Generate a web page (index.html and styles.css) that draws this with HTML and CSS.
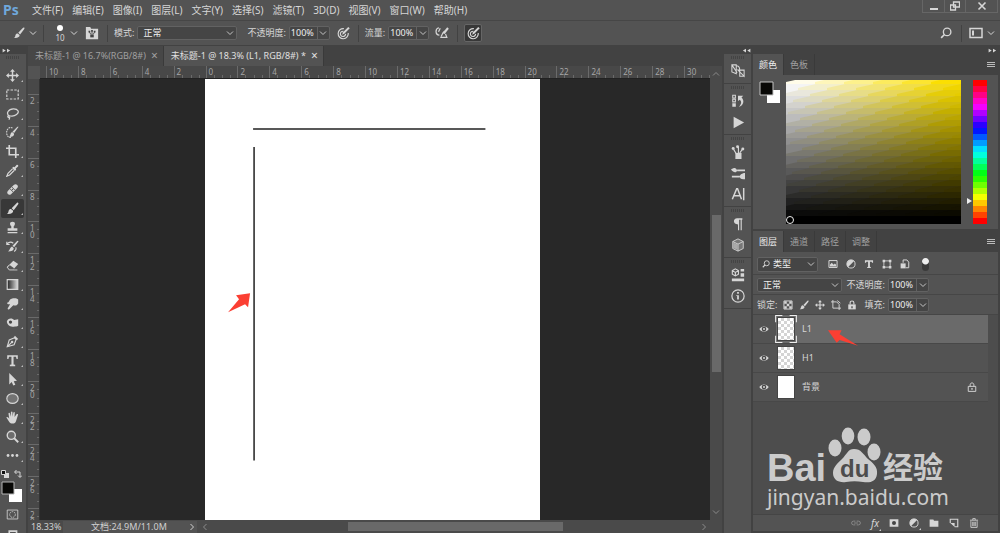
FILE: index.html
```
<!DOCTYPE html>
<html lang="zh-CN">
  <head>
    <meta charset="UTF-8" />
    <meta name="viewport" content="width=device-width, initial-scale=1.0" />
    <title>未标题-1 @ 18.3% (L1, RGB/8#)</title>
    <link rel="stylesheet" href="styles.css">
  </head>
  <body>
    <svg class="sprite" aria-hidden="true">
      <symbol id="caret" viewBox="0 0 8 8"><path d="M1 2.500l3 3 3-3" fill="none" stroke="currentColor" /></symbol>
      <symbol id="brush" viewBox="0 0 16 16">
        <path d="M14.8.8c.9.6.5 1.5 0 2.2L9.5 10 7 7.8l5.700-6C13.400 1 14.100.4 14.800.8z" />
        <path d="M6.200 8.500l2.600 2.300c.3 2.400-2.500 4.500-7.800 3.900 2.300-1 1.700-2.500 2.500-4.400.5-1.200 1.500-1.800 2.700-1.800z" />
      </symbol>
      <symbol id="move" viewBox="0 0 16 16">
        <path d="M8 0l3 3.500H8.900v3.600h3.600V5L16 8l-3.500 3V8.900H8.900v3.600H11L8 16l-3-3.500h2.100V8.900H3.500V11L0 8l3.500-3v2.100h3.600V3.500H5z" />
      </symbol>
      <symbol id="half" viewBox="0 0 16 16">
        <circle cx="8" cy="8" r="6.500" fill="none" stroke="currentColor" stroke-width="1.500" />
        <path d="M12.600 3.400A6.500 6.500 0 0 0 3.400 12.600z" />
      </symbol>
      <symbol id="search" viewBox="0 0 16 16">
        <circle cx="9.500" cy="6.500" r="5" fill="none" stroke="currentColor" stroke-width="1.800" />
        <path d="M6 10l-4.500 4.500" stroke="currentColor" stroke-width="2.200" />
      </symbol>
      <symbol id="crop" viewBox="0 0 16 16">
        <path d="M4 0v12h12M0 4h12v12" fill="none" stroke="currentColor" stroke-width="2" />
      </symbol>
      <symbol id="eye" viewBox="0 0 16 16">
        <path d="M.5 8C4 2.500 12 2.500 15.500 8 12 13.500 4 13.500.5 8z" />
        <circle cx="8" cy="8" r="3.700" fill="#484848" /><circle cx="8" cy="8" r="1.600" />
      </symbol>
      <symbol id="target" viewBox="0 0 16 16">
        <path d="M9 3a5.800 5.800 0 1 0 5 5M8.500 6A3 3 0 1 0 11 9" fill="none" stroke="currentColor" stroke-width="1.300" />
        <path d="M7 10l1-3 6-6 1.700 1.500-6 6z" />
      </symbol>
      <symbol id="double" viewBox="0 0 16 8"><path d="M1 1l5 3-5 3zM8 1l5 3-5 3z" /></symbol>
    </svg>

    <div class="app">
      <header class="menubar">
        <span class="logo">Ps</span>
        <nav class="menus">
          <button>文件(F)</button>
          <button>编辑(E)</button>
          <button>图像(I)</button>
          <button>图层(L)</button>
          <button>文字(Y)</button>
          <button>选择(S)</button>
          <button>滤镜(T)</button>
          <button>3D(D)</button>
          <button>视图(V)</button>
          <button>窗口(W)</button>
          <button>帮助(H)</button>
        </nav>
        <div class="window-buttons">
          <button aria-label="最小化"><svg class="s10" viewBox="0 0 10 10"><path d="M1 7h8v2H1z" /></svg></button>
          <button aria-label="还原"><svg class="s10" viewBox="0 0 10 10"><path d="M3.500 1h6v5h-6zM.5 4h5v5h-5z" fill="none" stroke="currentColor" stroke-width="1.300" /></svg></button>
          <button class="close" aria-label="关闭"><svg class="s10" viewBox="0 0 10 10"><path d="M1.500 1.500l7 7m0-7l-7 7" stroke="currentColor" stroke-width="1.600" /></svg></button>
        </div>
      </header>

      <div class="options">
        <button class="opt-brush" aria-label="画笔工具"><svg class="s12"><use href="#brush" /></svg><svg class="s8"><use href="#caret" /></svg></button>
        <i class="sep"></i>
        <button class="brush-size"><span class="dot"></span>10</button>
        <svg class="s8"><use href="#caret" /></svg>
        <button class="opt-icon" aria-label="画笔面板">
          <svg class="s14" viewBox="0 0 16 16"><path d="M1 1h5l1 2h8v12H1z" /><path d="M6 10h4v3H6z" fill="#444" /><path d="M7 10L5 7M8 10V6M9 10l2-3" stroke="#444" /><path d="M4 5.500h2v2H4zM7 4.500h2v2H7zM10 5.500h2v2h-2z" fill="#444" /></svg>
        </button>
        <i class="sep"></i>
        <label for="mode">模式:</label>
        <select id="mode" class="mode"><option>正常</option></select>
        <label class="gap-left" for="opacity">不透明度:</label>
        <span class="number"><input id="opacity" value="100%" /><button aria-label="选择不透明度"><svg class="s8"><use href="#caret" /></svg></button></span>
        <button class="opt-icon" aria-label="不透明度压力"><svg class="s14"><use href="#target" /></svg></button>
        <i class="sep"></i>
        <label for="flow">流量:</label>
        <span class="number"><input id="flow" value="100%" /><button aria-label="选择流量"><svg class="s8"><use href="#caret" /></svg></button></span>
        <button class="opt-icon" aria-label="喷枪">
          <svg class="s14" viewBox="0 0 16 16"><path d="M4.500 2C0 3 0 10 5 10.500M6 2.500l-2 4M7 12l2-4 2-2M12 9l1.500 4H6" fill="none" stroke="currentColor" stroke-width="1.400" /><path d="M8.500 8l5.500-6.500L15.800 3 11 9z" /></svg>
        </button>
        <i class="sep"></i>
        <button class="opt-icon pressed" aria-label="大小压力"><svg class="s14"><use href="#target" /></svg></button>
        <button class="opt-icon push" aria-label="搜索"><svg class="s12"><use href="#search" /></svg></button>
        <i class="sep"></i>
        <button class="opt-icon workspace" aria-label="工作区">
          <svg class="s14" viewBox="0 0 14 14"><path d="M1 2.500h12v9H1z" fill="none" stroke="currentColor" stroke-width="1.500" /><path d="M3 4.500h2v5H3z" /></svg>
          <svg class="s8"><use href="#caret" /></svg>
        </button>
      </div>

      <main class="workspace-area">
        <aside class="toolbar">
          <div class="strip"><svg class="chev"><use href="#double" /></svg></div>
          <div class="grip"></div>
          <button class="tool" aria-label="移动"><svg><use href="#move" /></svg></button>
          <button class="tool" aria-label="矩形选框"><svg viewBox="0 0 16 16"><path d="M1 2.500h14v11H1z" fill="none" stroke="currentColor" stroke-width="1.400" stroke-dasharray="3 1.600" /></svg></button>
          <button class="tool" aria-label="套索"><svg viewBox="0 0 16 16"><path d="M4 11C-.5 8 3 2.500 9 2.300s8 4 4 7c-3 2.200-7 2-9.500 1.200-2 .5-1.500 3 .5 2 1-1 .5 1.500-.5 3" fill="none" stroke="currentColor" stroke-width="1.500" /></svg></button>
          <button class="tool" aria-label="快速选择"><svg viewBox="0 0 16 16"><path d="M8 2.500C4 .5.800 4 .800 8s2 6.500 5.500 6" fill="none" stroke="currentColor" stroke-width="1.300" stroke-dasharray="2 1" /><path d="M15.500 1L10 8.500 8 7 14 1zM7.500 7.500l2.500 2c0 3-2 4-6 4 2-2 1-5 3.500-6z" /></svg></button>
          <button class="tool" aria-label="裁剪"><svg><use href="#crop" /></svg></button>
          <button class="tool" aria-label="吸管"><svg viewBox="0 0 16 16"><path d="M9 3.500l1.500.5L13 1.200c1.200-1 2.800.6 1.800 1.800L12 5.500l.5 1.500-1.500 1.500L7.500 5z" /><path d="M8 6L2.500 11.500 1 15l3.500-1.500L10 8" fill="none" stroke="currentColor" stroke-width="1.500" /></svg></button>
          <button class="tool" aria-label="修复画笔"><svg viewBox="0 0 16 16"><path d="M9.500 2.500c3-3 7 1 4 4l-7 7c-3 3-7-1-4-4z" /><path d="M5 7.500L8.500 11M7.500 5L11 8.500M8 7v2M7 8h2" stroke="#555" /></svg></button>
          <button class="tool active" aria-label="画笔"><svg><use href="#brush" /></svg></button>
          <button class="tool" aria-label="仿制图章"><svg viewBox="0 0 16 16"><path d="M8 1c4 0 3.500 4 1.500 5.500V9H14v3H2V9h4.500V6.500C4.500 5 4 1 8 1zM2 13.500h12V15H2z" /></svg></button>
          <button class="tool" aria-label="历史记录画笔"><svg viewBox="0 0 16 16"><path d="M15.500 1.500L10 9 8 7l6-6zM7.500 8l2 2c0 3-2.500 4-7 4 3-2 2-5 5-6z" /><path d="M1 5c3-3 6-2.500 8-1M1 2v3.500h3.500M12 9c1 2 0 4-2 5" fill="none" stroke="currentColor" stroke-width="1.400" /></svg></button>
          <button class="tool" aria-label="橡皮擦"><svg viewBox="0 0 16 16"><path d="M9 2l6 4-6 7H4L1 10z" /><path d="M4.500 7.500L10 11.500l-1.500 1.700H4L1.800 10.500z" fill="#555" /><path d="M1.500 10l3-3M1.500 10L4 13.500h10" fill="none" stroke="currentColor" /></svg></button>
          <button class="tool" aria-label="渐变"><svg viewBox="0 0 16 16"><defs><linearGradient id="grad"><stop stop-color="#222" /><stop offset="1" stop-color="#ddd" /></linearGradient></defs><path d="M1.500 2h13v12h-13z" fill="url(#grad)" stroke="currentColor" stroke-width="1.400" /></svg></button>
          <button class="tool" aria-label="涂抹"><svg viewBox="0 0 16 16"><path d="M5 3c3-2 8-2 10 0v5c-2 3-4 3-6 2l-5 5c-1.500 1-2.500-.5-1.500-1.800L5 9H2.500C1 8 1 7 3 6.500z" /></svg></button>
          <button class="tool" aria-label="减淡"><svg viewBox="0 0 16 16"><path d="M1 7c1-5 7-5 9-2l5-1v8c-4 2-13 2-14-5z" /><circle cx="5.500" cy="7.500" r="2" fill="#444" /></svg></button>
          <button class="tool" aria-label="钢笔"><svg viewBox="0 0 16 16"><path d="M10.500 3.500L4 6 1.500 14.500 10 12l2.500-6.500zM2 14l5-5" fill="none" stroke="currentColor" stroke-width="1.400" /><circle cx="7.500" cy="8.500" r="1.500" /><path d="M11 1l4 4-2 1.500L9.500 3z" /></svg></button>
          <button class="tool" aria-label="文字"><svg viewBox="0 0 16 16"><path d="M1.500 1.500h13V6H13l-.7-2.500H9.300v9.300l2 .500V15H4.700v-1.700l2-.500V3.500H3.700L3 6H1.500z" /></svg></button>
          <button class="tool" aria-label="路径选择"><svg viewBox="0 0 16 16"><path d="M4 0l9.500 9.500-4 .5 2 4.500-2.500 1-2-4.500L4 14z" /></svg></button>
          <button class="tool" aria-label="椭圆"><svg viewBox="0 0 16 16"><ellipse cx="8" cy="8" rx="7" ry="6" fill="#737373" stroke="currentColor" stroke-width="1.400" /></svg></button>
          <button class="tool" aria-label="抓手"><svg viewBox="0 0 16 16"><path d="M.5 8c1-1.500 2.500 0 3.500 1.500L3 3c.500-1.500 1.800-1 2 .3L6 7V1.500c.5-1.300 1.800-1.300 2 0V7l1-5c.5-1.300 2-1 1.800.5L10.500 7.500 13 4c1-1 2.200-.2 1.700 1L12.500 12c-1 3-2 3.500-4.500 3.500-3.500 0-4.500-3-7.500-7.500z" /></svg></button>
          <button class="tool" aria-label="缩放"><svg viewBox="0 0 16 16"><circle cx="6.500" cy="6.500" r="5" fill="#6c6c6c" stroke="currentColor" stroke-width="1.700" /><path d="M10 10l5 5" stroke="currentColor" stroke-width="2.400" /></svg></button>
          <button class="tool" aria-label="编辑工具栏"><svg viewBox="0 0 16 16"><circle cx="2.500" cy="8" r="1.700" /><circle cx="8" cy="8" r="1.700" /><circle cx="13.500" cy="8" r="1.700" /></svg></button>
          <div class="mini-row">
            <svg class="s8" viewBox="0 0 8 8"><path d="M3 3h5v5H3z" /><path d="M.5.500h4v4h-4z" fill="#111" stroke="currentColor" /></svg>
            <svg class="s8" viewBox="0 0 8 8"><path d="M1 2h5v5M2.500 0L.5 2l2 2M4 5.500l2 2 2-2" fill="none" stroke="currentColor" /></svg>
          </div>
          <svg class="swatches" viewBox="0 0 24 24"><path d="M9 8h13v13H9z" fill="#fff" /><path d="M2 1h12v12H2z" fill="#080806" stroke="#b5b5b5" /></svg>
          <button class="tool mode-tool" aria-label="快速蒙版"><svg viewBox="0 0 16 16"><path d="M1.500 2.500h13v11h-13z" fill="none" stroke="currentColor" /><circle cx="8" cy="8" r="3.500" fill="none" stroke="currentColor" stroke-dasharray="2 1" /></svg></button>
          <button class="tool mode-tool" aria-label="屏幕模式"><svg viewBox="0 0 16 16"><path d="M4 5h9v7H4z" fill="none" stroke="currentColor" stroke-width="2" /></svg></button>
        </aside>

        <section class="document">
          <div class="tabs">
            <div class="tab"><a href="#">未标题-1 @ 16.7%(RGB/8#)</a><button aria-label="关闭标签">×</button></div>
            <div class="tab current"><a href="#">未标题-1 @ 18.3% (L1, RGB/8#) *</a><button aria-label="关闭标签">×</button></div>
          </div>
          <div class="view">
            <div class="corner"></div>
            <div class="ruler-x"><div class="ticks-x">
              <span>10</span><span>8</span><span>6</span><span>4</span><span>2</span><span>0</span><span>2</span><span>4</span><span>6</span><span>8</span><span>10</span><span>12</span><span>14</span><span>16</span><span>18</span><span>20</span><span>22</span><span>24</span><span>26</span><span>28</span><span>30</span>
            </div></div>
            <div class="scroll-y">
              <svg class="s8 up"><use href="#caret" /></svg>
              <div class="track-y"><div class="thumb"></div></div>
              <svg class="s8"><use href="#caret" /></svg>
            </div>
            <div class="ruler-y"><div class="ticks-y">
              <span>2</span><span>4</span><span>6</span><span>8</span><span>10</span><span>12</span><span>14</span><span>16</span><span>18</span><span>20</span><span>22</span><span>24</span><span>26</span><span>28</span>
            </div></div>
            <div class="canvas">
              <div class="paper">
                <svg viewBox="0 0 334 441" preserveAspectRatio="xMinYMin meet">
                  <path d="M48 50h232M49 68v313" stroke="#222" stroke-width="1.500" />
                  <path d="M45 214l-14 2 3 4-11 13 17-8 3 3z" fill="#fb3f33" />
                </svg>
              </div>
            </div>
          </div>
          <div class="status">
            <span class="zoom-value">18.33%</span>
            <span class="doc-size"><span>文档:24.9M/11.0M</span><svg class="s8 right"><use href="#caret" /></svg></span>
            <div class="scroll-x">
              <svg class="s8 left"><use href="#caret" /></svg>
              <div class="track-x"><div class="thumb"></div></div>
              <svg class="s8 right"><use href="#caret" /></svg>
            </div>
          </div>
        </section>

        <aside class="dock">
          <div class="strip"><svg class="chev flip"><use href="#double" /></svg></div>
          <div class="dock-group">
            <button aria-label="复制源"><svg viewBox="0 0 16 16"><path d="M1 1h5v10L1 9zM1 1l6 9M8 7l7 7V7h-5zM6 2c3 0 4 2 4 5v7h5M10 7v7" fill="none" stroke="currentColor" stroke-width="1.200" /></svg></button>
          </div>
          <div class="dock-group">
            <button aria-label="历史记录"><svg viewBox="0 0 16 16"><path d="M2 1.500h3v3H2zM2 6h3v3H2z" fill="none" stroke="currentColor" stroke-width="1.200" /><path d="M1.500 10.500h4v4h-4zM8 2h6l-2 2C16 8 14 13 9 15c3-4 3.500-6 1-8.500L8 8z" /></svg></button>
            <button aria-label="动作"><svg viewBox="0 0 16 16"><path d="M3 2l12 6.500L3 15z" /></svg></button>
          </div>
          <div class="dock-group">
            <button aria-label="画笔预设"><svg viewBox="0 0 16 16"><path d="M5 9h7v7H5z" /><path d="M6 10L3 5M8.500 10V2M10 9l3-4" stroke="currentColor" stroke-width="1.300" /><circle cx="2.500" cy="4" r="1.700" /><circle cx="7.500" cy="2" r="1.700" /><circle cx="13.500" cy="4.500" r="1.700" /></svg></button>
            <button aria-label="画笔"><svg viewBox="0 0 16 16"><path d="M7 4h9v2H7zM0 4c4-3 6-2 7 1-1 3-4 3-7-1zM1 11h9v2H1zM16 8v7c-4 1-6-1-6-3s3-4 6-4z" /></svg></button>
            <button aria-label="字符"><svg viewBox="0 0 16 16"><path d="M1.500 14L6.500 2h1l4.500 12M3.500 10h7M14.500 1v14" fill="none" stroke="currentColor" stroke-width="1.700" /></svg></button>
          </div>
          <div class="dock-group">
            <button aria-label="段落"><svg viewBox="0 0 16 16"><path d="M13 1.500H7c-5 0-5 7 1 7V15h1.300V3h1.700v12h1.300V3H13z" /></svg></button>
            <button aria-label="3D"><svg viewBox="0 0 16 16"><path d="M8 1l6 3v8l-6 3-6-3V4z" fill="#777" stroke="currentColor" /><path d="M2 4l6 3 6-3M8 7v8" fill="none" stroke="currentColor" /><path d="M2.500 5L7.500 7.500v6l-5-2z" fill="#aaa" /></svg></button>
          </div>
          <div class="dock-group">
            <button aria-label="属性"><svg viewBox="0 0 16 16"><path d="M1 12h14v3H1zM11 1h4v3h-4zM11 6h4v4h-4z" /><path d="M5 1l3.500 2v4L5 9 1.500 7V3zM1.500 3L5 5l3.500-2M5 5v4" fill="none" stroke="currentColor" stroke-width="1.300" /></svg></button>
            <button aria-label="信息"><svg viewBox="0 0 16 16"><circle cx="8" cy="8" r="7" fill="none" stroke="currentColor" stroke-width="1.400" /><path d="M7 3.500h2v2H7zM6 7h3v5H7V8H6z" /></svg></button>
          </div>
          <div class="dock-rest"></div>
        </aside>

        <aside class="panels">
          <div class="strip"><svg class="chev end"><use href="#double" /></svg></div>
          <section class="panel">
            <div class="panel-tabs">
              <button class="current">颜色</button><button>色板</button>
              <button class="panel-menu" aria-label="面板菜单"></button>
            </div>
            <div class="color-body">
              <svg class="swatches" viewBox="0 0 24 24"><path d="M9 10h13v13H9z" fill="#fff" /><path d="M2 2h13v13H2z" fill="#080806" stroke="#c4c4c4" /></svg>
              <div class="field"><canvas id="field" width="175" height="144"></canvas><span class="picker"></span></div>
              <div class="hue"><canvas id="hue" width="14" height="144"></canvas><span class="pointer"></span></div>
            </div>
          </section>

          <section class="panel layers">
            <div class="panel-tabs">
              <button class="current">图层</button><button>通道</button><button>路径</button><button>调整</button>
              <button class="panel-menu" aria-label="面板菜单"></button>
            </div>
            <div class="row filter-row">
              <span class="kind"><svg class="s8"><use href="#search" /></svg><select aria-label="筛选类型"><option>类型</option></select></span>
              <div class="icons">
                <button aria-label="像素图层"><svg viewBox="0 0 16 16"><path d="M1.500 2.500h13v11h-13z" fill="none" stroke="currentColor" stroke-width="1.600" /><path d="M3 12V9l3-3 3 3 2-2 2 2v3z" /></svg></button>
                <button aria-label="调整图层"><svg><use href="#half" /></svg></button>
                <button aria-label="文字图层"><svg viewBox="0 0 16 16"><path d="M1.500 2h13v4H13l-1-1.500H9.500v8L11 13v1.500H5V13l1.500-.5v-8H4L3 6H1.500z" /></svg></button>
                <button aria-label="形状图层"><svg viewBox="0 0 16 16"><path d="M3 3h10v10H3z" fill="none" stroke="currentColor" stroke-width="1.400" /><path d="M1 1h4v4H1zM11 1h4v4h-4zM1 11h4v4H1zM11 11h4v4h-4z" /></svg></button>
                <button aria-label="智能对象"><svg viewBox="0 0 16 16"><path d="M5 6V1.500h6L14 5v9H9" fill="none" stroke="currentColor" stroke-width="1.600" /><path d="M1 7h8v8H1z" /></svg></button>
              </div>
              <input class="toggle" type="checkbox" aria-label="打开筛选" />
            </div>
            <div class="row">
              <select class="blend" aria-label="混合模式"><option>正常</option></select>
              <label class="push" for="layer-opacity">不透明度:</label>
              <span class="number"><input id="layer-opacity" value="100%" /><button aria-label="选择不透明度"><svg class="s8"><use href="#caret" /></svg></button></span>
            </div>
            <div class="row">
              <span>锁定:</span>
              <div class="icons lock-icons">
                <button aria-label="锁定透明像素"><svg viewBox="0 0 16 16"><path d="M1.500 1.500h13v13h-13z" fill="none" stroke="currentColor" stroke-width="1.500" /><path d="M2 2h4v4H2zM10 2h4v4h-4zM6 6h4v4H6zM2 10h4v4H2zM10 10h4v4h-4z" /></svg></button>
                <button aria-label="锁定图像像素"><svg><use href="#brush" /></svg></button>
                <button aria-label="锁定位置"><svg><use href="#move" /></svg></button>
                <button aria-label="防止嵌套"><svg viewBox="0 0 16 16"><path d="M3 0v13h13M0 3h9l4 4v9M10 1l5 4" fill="none" stroke="currentColor" stroke-width="1.500" /></svg></button>
                <button aria-label="锁定全部"><svg viewBox="0 0 16 16"><path d="M5 7V4.500c0-4 6-4 6 0V7" fill="none" stroke="currentColor" stroke-width="1.800" /><path d="M2 7h12v8H2z" /><path d="M7 10h2v3H7z" fill="#444" /></svg></button>
              </div>
              <label class="push" for="fill">填充:</label>
              <span class="number"><input id="fill" value="100%" /><button aria-label="选择填充"><svg class="s8"><use href="#caret" /></svg></button></span>
            </div>

            <div class="list-area">
              <ul class="layer-list">
                <li class="selected">
                  <button class="eye" aria-label="可见性"><svg class="s10"><use href="#eye" /></svg></button>
                  <span class="thumbnail checker"><svg class="frame" viewBox="0 0 21 27"><path d="M.5 7V.5H7M14 .5h6.500V7M20.500 20v6.500H14M7 26.500H.5V20" fill="none" stroke="#eee" /></svg></span><span>L1</span>
                  <svg class="pointer-arrow" viewBox="0 0 32 18" aria-hidden="true"><path d="M0 1l14 0-2 4 19 12-19-6-3 3z" fill="#fb3f33" /></svg>
                </li>
                <li>
                  <button class="eye" aria-label="可见性"><svg class="s10"><use href="#eye" /></svg></button>
                  <span class="thumbnail checker"></span><span>H1</span>
                </li>
                <li>
                  <button class="eye" aria-label="可见性"><svg class="s10"><use href="#eye" /></svg></button>
                  <span class="thumbnail"></span><span>背景</span>
                  <svg class="lock s10" viewBox="0 0 16 16"><path d="M5 7V4.500c0-4 6-4 6 0V7M2 7h12v8H2z" fill="none" stroke="currentColor" stroke-width="1.500" /><path d="M7 9.500h2v3H7z" /></svg>
                </li>
              </ul>
              <svg class="watermark" viewBox="0 0 184 88">
                <text class="bai" x="2" y="57">Bai</text>
                <g>
                  <ellipse cx="70" cy="24" rx="6.500" ry="8.500" /><ellipse cx="83" cy="12" rx="6.300" ry="8.500" />
                  <ellipse cx="99" cy="13" rx="6.500" ry="8.500" /><ellipse cx="109" cy="28" rx="6.500" ry="8.500" />
                  <path d="M89 25c7 0 9 5 14 10 5 4 10 8 9 15-1 8-7 9-14 8-6-1-11-1-17 0-7 1-13-2-13-9 0-6 5-10 9-14 5-5 6-10 12-10z" />
                </g>
                <text class="du" x="75" y="53">du</text>
                <text class="jing" x="118" y="54">经验</text>
                <text class="site" x="2" y="81">jingyan.baidu.com</text>
              </svg>
            </div>

            <div class="layer-footer">
              <button class="dim" aria-label="链接图层"><svg viewBox="0 0 16 16"><path d="M7 5H4a3 3 0 0 0 0 6h3M9 5h3a3 3 0 0 1 0 6H9M5 8h6" fill="none" stroke="currentColor" stroke-width="1.600" /></svg></button>
              <button class="fx more">fx</button>
              <button aria-label="添加蒙版"><svg viewBox="0 0 16 16"><path d="M1 2h14v12H1z" /><circle cx="8" cy="8" r="3.200" fill="#444" /></svg></button>
              <button class="more" aria-label="新建调整图层"><svg><use href="#half" /></svg></button>
              <button aria-label="新建组"><svg viewBox="0 0 16 16"><path d="M1 2.500h6l1 2h7V14H1z" /></svg></button>
              <button aria-label="新建图层"><svg viewBox="0 0 16 16"><path d="M2 8V2h12v12H9" fill="none" stroke="currentColor" stroke-width="1.800" /><path d="M2 8h7v6.500z" /></svg></button>
              <button aria-label="删除图层"><svg viewBox="0 0 16 16"><path d="M1.500 3.500h13M6 3V1h4v2M3 5v10h10V5M6 6v7M8 6v7M10 6v7" fill="none" stroke="currentColor" stroke-width="1.400" /></svg></button>
            </div>
          </section>
        </aside>
      </main>
    </div>
    <script src="script.js"></script>
  </body>
</html>
```
FILE: styles.css
```
*,
*::before,
*::after {
  box-sizing: border-box;
}

body {
  margin: 0;
  background-color: #424242;
  color: #d6d6d6;
  font-family: "Noto Sans", "Noto Sans CJK SC", sans-serif;
  font-size: 9px;
  line-height: 12px;
}

button,
input,
select {
  margin: 0;
  padding: 0;
  border: 0;
  background: none;
  color: inherit;
  font: inherit;
}

button {
  display: flex;
  align-items: center;
  justify-content: center;
  white-space: nowrap;
}

a {
  color: inherit;
  text-decoration: none;
}

svg {
  display: block;
  flex: none;
  fill: currentColor;
}

.sprite {
  position: absolute;
  width: 0;
  height: 0;
}

.s8 { width: 8px; height: 8px; }
.s10 { width: 10px; height: 10px; }
.s12 { width: 12px; height: 12px; }
.s14 { width: 14px; height: 14px; }
.up { transform: rotate(180deg); }
.left { transform: rotate(90deg); }
.right { transform: rotate(-90deg); }
.push { margin-left: auto; }

.app {
  display: flex;
  flex-direction: column;
  height: 100vh;
  overflow: hidden;
}

/* menu bar */
.menubar {
  display: flex;
  align-items: center;
  height: 20px;
  background-color: #535353;
}

.logo {
  width: 27px;
  padding-left: 3px;
  color: #6fa8dc;
  font-size: 14px;
  font-weight: bold;
}

.menus {
  display: flex;
  font-size: 10px;
}

.menus button {
  padding: 0 4px 0 5px;
}

.window-buttons {
  display: flex;
  align-self: flex-start;
  margin-left: auto;
  margin-right: 2px;
  border: 1px solid #666;
  border-top: 0;
}

.window-buttons button {
  width: 21px;
  height: 12px;
}

.window-buttons button + button {
  border-left: 1px solid #666;
}

.window-buttons .close {
  width: 32px;
}

/* options bar */
.options {
  display: flex;
  align-items: center;
  height: 26px;
  padding: 0 4px 0 13px;
  border-top: 1px solid #464646;
  border-bottom: 1px solid #424242;
  background-color: #535353;
}

.opt-brush {
  gap: 4px;
}

.sep {
  width: 1px;
  height: 17px;
  margin: 0 6px;
  background-color: #424242;
}

.brush-size {
  flex-direction: column;
  width: 20px;
  font-size: 8px;
  line-height: 10px;
}

.options > .s8 {
  margin: 0 5px 0 0;
}

.dot {
  width: 6px;
  height: 6px;
  margin: 2px;
  border-radius: 50%;
  background-color: #fff;
}

.opt-icon {
  width: 18px;
  height: 18px;
}

.options .opt-icon {
  margin-left: 4px;
}

.options > .s8 + .opt-icon {
  margin-left: 0;
}

.options .opt-icon.pressed {
  margin-left: 0;
  border: 1px solid #666;
  border-radius: 2px;
  background-color: #383838;
}

.options .push {
  margin-left: auto;
}

.options .workspace {
  gap: 4px;
  width: 28px;
  margin-left: 0;
}

.gap-left {
  margin-left: 10px;
}

select {
  height: 14px;
  padding: 0 14px 0 5px;
  border: 1px solid #626262;
  border-radius: 2px;
  background: #454545 url("data:image/svg+xml,%3Csvg xmlns='http://www.w3.org/2000/svg' width='8' height='8'%3E%3Cpath d='M1 2.500l3 3 3-3' fill='none' stroke='%23c4c4c4'/%3E%3C/svg%3E") no-repeat right 2px center;
  color: #eee;
  appearance: none;
}

.mode {
  width: 100px;
  margin-left: 3px;
}

.number {
  display: flex;
  height: 14px;
  margin-left: 3px;
  border: 1px solid #626262;
  border-radius: 2px;
  background-color: #454545;
  color: #eee;
}

.number input {
  width: 27px;
  padding-left: 1px;
}

.number button {
  width: 12px;
  border-left: 1px solid #626262;
  color: #c4c4c4;
}

/* work area */
.workspace-area {
  display: flex;
  flex: 1;
  gap: 2px;
  min-height: 0;
}

.strip {
  display: flex;
  align-items: center;
  flex: none;
  height: 8px;
  background-color: #424242;
}

.chev {
  width: 10px;
  height: 5px;
  margin-left: 2px;
}

.chev.flip {
  margin-left: auto;
  transform: rotate(180deg);
}

.chev.end {
  margin-left: auto;
}

.toolbar {
  display: flex;
  flex-direction: column;
  flex: none;
  width: 26px;
  overflow: hidden;
  background-color: #535353;
}

.grip {
  flex: none;
  height: 12px;
}

.grip,
.dock-group {
  padding-top: 2px;
}

.grip::before,
.dock-group::before {
  content: "";
  display: block;
  width: 14px;
  height: 3px;
  margin: 0 auto 1px;
  background: repeating-linear-gradient(to right, #444 0 1px, transparent 1px 2px);
}

.tool {
  position: relative;
  flex: none;
  height: 19px;
  margin: 0 2px 0 1px;
  border-radius: 2px;
}

.tool svg {
  width: 13px;
  height: 13px;
}

.tool.active {
  background-color: #383838;
}

.tool::after {
  content: "";
  position: absolute;
  right: 1px;
  bottom: 3px;
  border-left: 2px solid transparent;
  border-bottom: 2px solid #bbb;
}

.mode-tool::after {
  display: none;
}

.mini-row {
  display: flex;
  justify-content: space-between;
  padding: 5px 4px 3px 1px;
}

.swatches {
  width: 24px;
  height: 24px;
}

/* document */
.document {
  display: flex;
  flex: 1;
  flex-direction: column;
  min-width: 0;
}

.tabs {
  display: flex;
  height: 20px;
}

.tab {
  display: flex;
  align-items: center;
  gap: 5px;
  padding: 0 5px 0 7px;
  border-right: 1px solid #3a3a3a;
  background-color: #474747;
  color: #a0a0a0;
}

.tab.current {
  background-color: #535353;
  color: #e0e0e0;
}

.tab button {
  font-size: 12px;
}

.view {
  display: grid;
  flex: 1;
  grid-template-columns: 12px 1fr 12px;
  grid-template-rows: 13px 1fr;
  min-height: 0;
}

.corner {
  background-color: #535353;
}

.ruler-x,
.ruler-y {
  overflow: hidden;
  background-color: #484848;
  color: #a6a6a6;
  font-size: 8px;
}

.ruler-x {
  border-bottom: 1px solid #222;
}

.ticks-x {
  display: grid;
  grid-template-columns: repeat(21, 1fr);
  height: 100%;
  margin-right: -6px;
  padding-left: 6px;
}

.ticks-x span {
  padding-left: 2px;
  border-left: 1px solid #6a6a6a;
  background: repeating-linear-gradient(to right, transparent 0 24%, #6a6a6a 24% 27%) bottom / 100% 3px no-repeat;
}

.ruler-y {
  border-right: 1px solid #333;
}

.ticks-y {
  display: grid;
  grid-template-rows: repeat(14, 1fr);
  height: calc(100% + 20px);
  padding-top: 15px;
}

.ticks-y span {
  padding: 2px 5px 0 2px;
  border-top: 1px solid #6a6a6a;
  background: repeating-linear-gradient(to bottom, transparent 0 24%, #6a6a6a 24% 27%) right / 3px 100% no-repeat;
  line-height: 7px;
  word-break: break-all;
}

.canvas {
  display: grid;
  grid-template-columns: 165fr 334fr 170fr;
  min-height: 0;
  background-color: #282828;
}

.paper {
  grid-column: 2;
  min-height: 0;
  background-color: #fff;
}

.paper svg {
  width: 100%;
}

.scroll-y {
  display: flex;
  grid-column: 3;
  grid-row: 1 / 3;
  flex-direction: column;
  align-items: center;
  justify-content: space-between;
  padding: 4px 0;
  background-color: #4a4a4a;
  color: #8a8a8a;
}

.track-y {
  display: flex;
  flex: 1;
  flex-direction: column;
  width: 9px;
}

.track-y::before {
  content: "";
  flex: 137;
}

.track-y::after {
  content: "";
  flex: 136;
}

.thumb {
  flex: 157;
  background-color: #696969;
}

.status {
  display: flex;
  flex: none;
  align-items: center;
  height: 13px;
  background-color: #4a4a4a;
  color: #d0d0d0;
}

.zoom-value {
  width: 35px;
  padding-left: 3px;
}

.doc-size {
  display: flex;
  align-items: center;
  justify-content: space-between;
  width: 134px;
  padding: 0 1px 0 28px;
  background-color: #535353;
}

.scroll-x {
  display: flex;
  flex: 1;
  align-items: center;
  padding: 0 14px 0 4px;
  color: #8a8a8a;
}

.track-x {
  display: flex;
  flex: 1;
  height: 9px;
}

.track-x::before {
  content: "";
  flex: 138;
}

.track-x::after {
  content: "";
  flex: 136;
}

.track-x .thumb {
  flex: 214;
}

/* icon dock */
.dock {
  display: flex;
  flex: none;
  flex-direction: column;
  gap: 1px;
  width: 27px;
}

.dock .strip {
  margin-bottom: -1px;
}

.dock-group {
  padding-bottom: 2px;
  background-color: #535353;
}

.dock-group button {
  width: 100%;
  height: 21px;
}

.dock-group svg {
  width: 14px;
  height: 14px;
}

.dock-rest {
  flex: 1;
  background-color: #535353;
}

/* panels */
.panels {
  display: flex;
  flex: none;
  flex-direction: column;
  width: 247px;
  padding-right: 2px;
  padding-bottom: 2px;
}

.panel {
  background-color: #535353;
}

.panel-tabs {
  display: flex;
  height: 21px;
  background-color: #424242;
}

.panel-tabs button {
  border-right: 1px solid #3a3a3a;
  color: #a0a0a0;
}

.panel-tabs button:not(.panel-menu) {
  width: 31px;
}

.panel-tabs .current {
  background-color: #535353;
  color: #eee;
}

.panel-tabs .panel-menu {
  align-self: center;
  width: 8px;
  height: 6px;
  margin-left: auto;
  margin-right: 3px;
  border: 0;
  background: repeating-linear-gradient(to bottom, #bbb 0 1px, transparent 1px 2px);
}

.color-body {
  display: flex;
  padding: 5px 11px 5px 5px;
}

.field {
  position: relative;
  flex: 1;
  margin: 0 12px 0 4px;
}

.field canvas,
.hue canvas {
  display: block;
  width: 100%;
  height: 144px;
}

.picker {
  position: absolute;
  left: 0;
  bottom: 0;
  width: 8px;
  height: 8px;
  border: 1px solid #eee;
  border-radius: 50%;
}

.hue {
  position: relative;
  width: 14px;
}

.pointer {
  position: absolute;
  top: 118px;
  left: -6px;
  border: 3px solid transparent;
  border-left: 5px solid #eee;
  border-right: 0;
}

.layers {
  display: flex;
  flex: 1;
  flex-direction: column;
  min-height: 0;
  margin-top: 2px;
}

.row {
  display: flex;
  align-items: center;
  flex: none;
  height: 20px;
  padding: 0 69px 0 4px;
  border-bottom: 1px solid #464646;
}

.filter-row {
  height: 23px;
  padding-top: 2px;
}

.kind {
  display: flex;
  align-items: center;
  width: 63px;
  border: 1px solid #626262;
  border-radius: 2px;
  background-color: #454545;
}

.kind .s8 {
  margin-left: 4px;
}

.kind select {
  flex: 1;
  height: 13px;
  padding-left: 3px;
  border: 0;
}

.icons {
  display: flex;
  gap: 8px;
  margin-left: 10px;
}

.icons svg {
  width: 10px;
  height: 10px;
}

.lock-icons {
  gap: 6px;
  margin-left: 6px;
}

.toggle {
  width: 7px;
  height: 13px;
  margin-left: 12px;
  border-radius: 4px;
  background: radial-gradient(circle at 50% 3px, #eee 3px, #3a3a3a 4px);
  appearance: none;
}

.blend {
  width: 85px;
}

.list-area {
  position: relative;
  flex: 1;
  min-height: 0;
  background-color: #4d4d4d;
}

.layer-list {
  margin: 0;
  padding: 0 10px 0 0;
  list-style: none;
}

.layer-list li {
  display: flex;
  align-items: center;
  height: 29px;
  border-bottom: 1px solid #484848;
  background-color: #535353;
}

.layer-list .selected {
  background: linear-gradient(to right, #535353 23px, #6a6a6a 23px);
}

.eye {
  width: 22px;
  height: 28px;
}

.thumbnail {
  position: relative;
  width: 18px;
  height: 24px;
  margin: 0 7px 0 2px;
  border: 1px solid #444;
  background-color: #fff;
}

.checker {
  background: conic-gradient(#d4d4d4 25%, #fff 0 50%, #d4d4d4 0 75%, #fff 0) 0 0 / 6px 6px;
}

/* brackets round the thumbnail of the selected layer */
.frame {
  position: absolute;
  top: -3px;
  left: -3px;
  width: 22px;
  height: 28px;
}

.pointer-arrow {
  width: 31px;
  height: 18px;
  margin: 18px 0 0 16px;
}

.lock {
  margin-left: auto;
  margin-right: 11px;
}

/* Baidu logo over the empty part of the list */
.watermark {
  position: absolute;
  right: 49px;
  bottom: 2px;
  width: 184px;
  height: 88px;
  fill: #cbcbcb;
}

.bai {
  font: bold 38px "Liberation Sans", sans-serif;
}

.du {
  fill: #4d4d4d;
  font: bold 24px "Liberation Sans", sans-serif;
}

.jing {
  font: bold 30px "Noto Sans CJK SC", sans-serif;
}

.site {
  font: 21px "Noto Sans", sans-serif;
}

.layer-footer {
  display: flex;
  align-items: center;
  justify-content: flex-end;
  flex: none;
  gap: 10px;
  height: 17px;
  padding-right: 19px;
  border-top: 1px solid #454545;
}

.layer-footer svg {
  width: 10px;
  height: 10px;
}

.layer-footer .dim {
  color: #888;
}

.layer-footer button {
  position: relative;
}

.layer-footer .more::after {
  content: "";
  position: absolute;
  right: -2px;
  bottom: -2px;
  border-left: 2px solid transparent;
  border-bottom: 2px solid #ccc;
}

.fx {
  font-size: 10px;
  font-style: italic;
}
```
FILE: script.js
```
// Colour field: white to yellow across, fading to black downwards, in flat patches
const field = document.getElementById("field").getContext("2d");
const steps = 24;
const stepHeight = 6;

for (let row = 0; row < steps; row++) {
  const light = 1 - row / (steps - 1);
  const shift = (row * 17) % 29;
  for (let x = -shift; x < 175; x += 29) {
    const t = Math.min(1, Math.max(0, (x + 14) / 160));
    const r = Math.round((255 - 4 * t) * light);
    const g = Math.round((255 - 32 * t) * light);
    const b = Math.round(255 * (1 - t) * light);
    const y = row * stepHeight;
    field.fillStyle = `rgb(${r}, ${g}, ${b})`;
    field.beginPath();
    field.moveTo(x, y + 2);
    field.lineTo(x + 18, y - 2);
    field.lineTo(x + 200, y - 2);
    field.lineTo(x + 200, y + 8);
    field.lineTo(x, y + 8);
    field.fill();
  }
}

// Hue bar, red at both ends
const hue = document.getElementById("hue").getContext("2d");

for (let i = 0; i < steps; i++) {
  hue.fillStyle = `hsl(${360 - (i * 360) / (steps - 1)}, 100%, 50%)`;
  hue.fillRect(0, i * stepHeight, 14, stepHeight);
}
```
